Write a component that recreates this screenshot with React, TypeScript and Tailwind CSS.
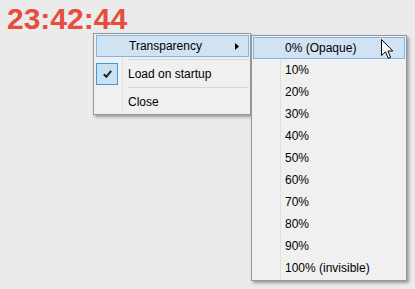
import React from 'react';

const levels = ['0% (Opaque)', '10%', '20%', '30%', '40%', '50%', '60%', '70%', '80%', '90%', '100% (invisible)'];

const Gutter: React.FC<{ children?: React.ReactNode }> = ({ children }) => (
  <div className="w-[27px] h-full flex items-center shrink-0 relative">
    {children}
    <div className="absolute right-0 top-0 h-full w-px bg-[#e0e0e0]" />
  </div>
);

const Separator = () => (
  <div className="h-[6px] flex">
    <div className="w-[27px] shrink-0 border-r border-[#e0e0e0]" />
    <div className="flex-1 pl-[5px] pt-[2px]">
      <div className="h-px bg-[#d7d7d7]" />
    </div>
  </div>
);

const Cursor = () => (
  <svg width="13" height="21" viewBox="0 0 13 21" className="absolute left-[127px] top-[1px]">
    <path
      d="M0.5 0.5 L0.5 16.5 L4.5 12.8 L7.3 19.3 L9.6 18.3 L6.9 12 L11.8 12 Z"
      fill="#fff"
      stroke="#000"
      strokeWidth="1"
      strokeLinejoin="miter"
    />
  </svg>
);

export default function App() {
  return (
    <div className="w-[415px] h-[289px] bg-[#ebebeb] relative overflow-hidden font-['Liberation_Sans',Arial,sans-serif] text-[12px] text-black">
      <div className="pl-[7px] pt-[4px] text-[30px] leading-none font-bold text-[#e84c3d]">23:42:44</div>

      {/* main context menu */}
      <div className="absolute left-[93px] top-[33px] w-[158px] bg-[#f0f0f0] border border-[#979797] p-[1px] pl-[2px] shadow-[2px_2px_3px_rgba(0,0,0,0.35)]">
        <div className="h-[22px] flex items-center bg-[#d1e2f2] border border-[#7eb4ea]">
          <Gutter />
          <span className="pl-[5px] flex-1">Transparency</span>
          <svg width="4" height="7" viewBox="0 0 4 7" className="mr-[9px]">
            <path d="M0 0 L4 3.5 L0 7 Z" fill="#000" />
          </svg>
        </div>
        <Separator />
        <div className="h-[22px] flex items-center">
          <div className="w-[27px] h-full shrink-0 border-r border-[#e0e0e0] flex items-center">
            <div className="w-[22px] h-[22px] bg-[#c8e1f3] border border-[#3c9bdc] flex items-center justify-center">
              <svg width="9" height="8" viewBox="0 0 9 8">
                <path d="M0.8 4.2 L3.3 6.8 L8.2 0.8" fill="none" stroke="#222" strokeWidth="2" />
              </svg>
            </div>
          </div>
          <span className="pl-[5px]">Load on startup</span>
        </div>
        <Separator />
        <div className="h-[22px] flex items-center">
          <div className="w-[27px] h-full shrink-0 border-r border-[#e0e0e0]" />
          <span className="pl-[5px]">Close</span>
        </div>
      </div>

      {/* submenu */}
      <div className="absolute left-[251px] top-[35px] w-[156px] bg-[#f0f0f0] border border-[#979797] p-[1px] shadow-[2px_2px_3px_rgba(0,0,0,0.35)]">
        <div className="relative">
          <div className="absolute left-[27px] top-0 bottom-0 w-px bg-[#e0e0e0]" />
          {levels.map((l, i) => (
            <div
              key={l}
              className={
                i === 0
                  ? 'h-[22px] flex items-center bg-[#d1e2f2] border border-[#7eb4ea] relative'
                  : 'h-[22px] flex items-center relative'
              }
            >
              <span className={i === 0 ? 'pl-[31px]' : 'pl-[32px]'}>{l}</span>
              {i === 0 && <Cursor />}
            </div>
          ))}
        </div>
      </div>
    </div>
  );
}
